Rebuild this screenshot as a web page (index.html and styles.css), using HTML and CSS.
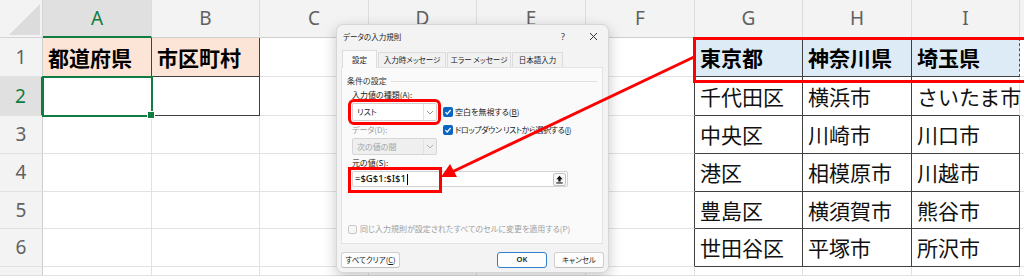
FILE: index.html
```html
<!DOCTYPE html>
<html lang="ja">
<head>
<meta charset="utf-8">
<title>データの入力規則</title>
<link rel="stylesheet" href="styles.css">
</head>
<body>
<div class="grid">
  <div class="corner"><svg width="43" height="38" viewBox="0 0 43 38"><polygon points="40,4 40,35 9,35" fill="#dcdcdc"/></svg></div>
  <div class="ch sel">A</div><div class="ch">B</div><div class="ch">C</div><div class="ch">D</div><div class="ch">E</div><div class="ch">F</div><div class="ch">G</div><div class="ch">H</div><div class="ch">I</div><div class="ch"></div>

  <div class="rh">1</div>
  <div class="c hd pe dr db">都道府県</div><div class="c hd pe dr db">市区町村</div><div class="c"></div><div class="c"></div><div class="c"></div><div class="c dr"></div>
  <div class="c hd bl dr db mark">東京都</div><div class="c hd bl dr db">神奈川県</div><div class="c hd bl dash db">埼玉県</div><div class="c"></div>

  <div class="rh sel">2</div>
  <div class="c sc dr db"></div><div class="c dr db"></div><div class="c"></div><div class="c"></div><div class="c"></div><div class="c dr"></div>
  <div class="c dr db">千代田区</div><div class="c dr db">横浜市</div><div class="c db">さいたま市</div><div class="c"></div>

  <div class="rh">3</div>
  <div class="c"></div><div class="c"></div><div class="c"></div><div class="c"></div><div class="c"></div><div class="c dr"></div>
  <div class="c dr db">中央区</div><div class="c dr db">川崎市</div><div class="c dr db">川口市</div><div class="c"></div>

  <div class="rh">4</div>
  <div class="c"></div><div class="c"></div><div class="c"></div><div class="c"></div><div class="c"></div><div class="c dr"></div>
  <div class="c dr db">港区</div><div class="c dr db">相模原市</div><div class="c dr db">川越市</div><div class="c"></div>

  <div class="rh">5</div>
  <div class="c"></div><div class="c"></div><div class="c"></div><div class="c"></div><div class="c"></div><div class="c dr"></div>
  <div class="c dr db">豊島区</div><div class="c dr db">横須賀市</div><div class="c dr db">熊谷市</div><div class="c"></div>

  <div class="rh">6</div>
  <div class="c"></div><div class="c"></div><div class="c"></div><div class="c"></div><div class="c"></div><div class="c dr"></div>
  <div class="c dr db">世田谷区</div><div class="c dr db">平塚市</div><div class="c dr db">所沢市</div><div class="c"></div>

  <div class="rh"></div>
  <div class="c"></div><div class="c"></div><div class="c"></div><div class="c"></div><div class="c"></div><div class="c"></div>
  <div class="c"></div><div class="c"></div><div class="c"></div><div class="c"></div>
</div>

<div class="dlg">
  <div class="dlg-title">
    <span class="dlg-name">データの入力規則</span>
    <span class="dlg-help">?</span>
    <span class="dlg-close"><svg width="9" height="9" viewBox="0 0 9 9"><path d="M1 1 L8 8 M8 1 L1 8" stroke="#333" stroke-width="1"/></svg></span>
  </div>
  <div class="tabs">
    <div class="tab on">設定</div>
    <div class="tab">入力時メッセージ</div>
    <div class="tab">エラー メッセージ</div>
    <div class="tab">日本語入力</div>
  </div>
  <div class="panel">
    <div class="sect"><span>条件の設定</span><i class="sect-line"></i></div>
    <div class="form">
      <div class="lbl">入力値の種類(A):</div><div></div>
      <div class="dd hl"><span class="dd-val">リスト</span><span class="dd-btn"><svg width="8" height="5" viewBox="0 0 8 5"><path d="M1 1 L4 4 L7 1" stroke="#888" fill="none" stroke-width="0.9"/></svg></span></div>
      <div class="chk"><svg class="box" width="10" height="10" viewBox="0 0 10 10"><rect width="10" height="10" rx="2" fill="#0a64c2"/><path d="M2.4 5.2 L4.2 7 L7.6 3" stroke="#fff" fill="none" stroke-width="1.2"/></svg><span>空白を無視する(<u>B</u>)</span></div>
      <div class="lbl dis">データ(D):</div>
      <div class="chk"><svg class="box" width="10" height="10" viewBox="0 0 10 10"><rect width="10" height="10" rx="2" fill="#0a64c2"/><path d="M2.4 5.2 L4.2 7 L7.6 3" stroke="#fff" fill="none" stroke-width="1.2"/></svg><span class="narrow">ドロップダウン リストから選択する(<u>I</u>)</span></div>
      <div class="dd dis"><span class="dd-val">次の値の間</span><span class="dd-btn"><svg width="8" height="5" viewBox="0 0 8 5"><path d="M1 1 L4 4 L7 1" stroke="#aaa" fill="none" stroke-width="0.9"/></svg></span></div>
      <div></div>
    </div>
    <div class="lbl src">元の値(S):</div>
    <div class="inp">
      <span class="inp-val">=$G$1:$I$1<i class="caret"></i></span>
      <span class="inp-btn"><svg width="9" height="9" viewBox="0 0 9 9"><path d="M4.5 0.8 L1.3 4.3 H3.3 V6.6 H5.7 V4.3 H7.7 Z" fill="#111"/><rect x="1.3" y="7.4" width="6.4" height="1.1" fill="#111"/></svg></span>
      <span class="inp-mark"></span>
    </div>
    <div class="chk dis all"><span class="box-off"></span><span>同じ入力規則が設定されたすべてのセルに変更を適用する(P)</span></div>
  </div>
  <div class="btns">
    <div class="btn clr">すべてクリア(<u>C</u>)</div>
    <div class="spacer"></div>
    <div class="btn ok">OK</div>
    <div class="btn cancel">キャンセル</div>
  </div>
</div>

<svg class="arrow" width="1024" height="276" viewBox="0 0 1024 276">
  <line x1="694" y1="57" x2="452" y2="172" stroke="#ff0000" stroke-width="3"/>
  <polygon points="441,177 457,177 450,164" fill="#ff0000"/>
</svg>
</body>
</html>
```

FILE: styles.css
```css
* { box-sizing: border-box; margin: 0; padding: 0; }

body {
  margin: 0;
  width: 1024px;
  height: 276px;
  overflow: hidden;
  background: #ffffff;
  position: relative;
  font-family: "Noto Sans CJK JP", "Noto Sans", sans-serif;
}

.grid {
  display: grid;
  grid-template-columns: 43px 109px 108px 109px 108px 109px 109px 108px 109px 108px 1fr;
  grid-template-rows: 38px 39px 39px 38px 38px 37px 38px 1fr;
  height: 276px;
  overflow: hidden;
}

.corner {
  background: #f3f3f3;
  border-right: 1px solid #d4d4d4;
  border-bottom: 1px solid #d4d4d4;
}
.corner svg { display: block; }

.ch {
  background: #f3f3f3;
  border-right: 1px solid #dcdcdc;
  border-bottom: 1px solid #cfcfcf;
  display: flex;
  align-items: center;
  justify-content: center;
  font-family: "Noto Sans", sans-serif;
  font-size: 19px;
  color: #616161;
  line-height: 1;
}
.ch.sel {
  background: #e0e0e0;
  color: #107c41;
  border-bottom: 2px solid #107c41;
}

.rh {
  background: #f3f3f3;
  border-right: 1px solid #cfcfcf;
  border-bottom: 1px solid #e0e0e0;
  display: flex;
  align-items: center;
  justify-content: center;
  font-family: "Noto Sans", sans-serif;
  font-size: 19px;
  color: #616161;
  line-height: 1;
}
.rh.sel {
  background: #e0e0e0;
  color: #107c41;
  border-right: 2px solid #107c41;
}

.c {
  border-right: 1px solid #e2e2e2;
  border-bottom: 1px solid #e2e2e2;
  display: flex;
  align-items: center;
  padding-left: 5px;
  font-size: 21px;
  line-height: 1;
  color: #111;
  white-space: nowrap;
  min-width: 0;
}
.c.hd { font-weight: 700; color: #000; }
.c.pe { background: #fce4d6; }
.c.bl { background: #ddebf7; }
.c.dr { border-right-color: #404040; }
.c.db { border-bottom-color: #404040; }
.c.dash { border-right: 1px dashed #107c41; }

.c.sc {
  position: relative;
  outline: 2px solid #107c41;
  outline-offset: -1px;
}
.c.sc::after {
  content: "";
  position: absolute;
  right: -4px;
  bottom: -4px;
  width: 6px;
  height: 6px;
  background: #107c41;
  border: 1px solid #fff;
}

/* red annotation frame over G1:I1 */
.c.mark { position: relative; }
.c.mark::before {
  content: "";
  position: absolute;
  left: -2px;
  top: -1px;
  width: 330px;
  height: 40px;
  border: 3px solid #ff0000;
  z-index: 2;
}

/* dialog */
.dlg {
  position: absolute;
  left: 336px;
  top: 24px;
  width: 273px;
  height: 249px;
  background: #f3f3f3;
  border: 1px solid #d6d6d6;
  border-radius: 7px;
  box-shadow: 0 4px 14px rgba(0, 0, 0, 0.22);
  display: flex;
  flex-direction: column;
  font-size: 8px;
  line-height: 1;
  color: #1b1b1b;
  font-feature-settings: "palt";
  white-space: nowrap;
}

.dlg-title {
  height: 23px;
  display: flex;
  align-items: center;
  padding-left: 6px;
}
.dlg-name { font-size: 7.5px; }
.dlg-help {
  margin-left: auto;
  font-family: "Noto Sans", sans-serif;
  font-size: 9px;
  color: #333;
  width: 10px;
  text-align: center;
}
.dlg-close {
  width: 9px;
  height: 9px;
  margin: 0 10px 0 21px;
  display: flex;
}

.tabs {
  display: flex;
  align-items: flex-end;
  padding-left: 5px;
  height: 18px;
  margin-top: 1px;
}
.tab {
  height: 15px;
  display: flex;
  align-items: center;
  justify-content: center;
  background: #f1f1f1;
  border: 1px solid #dcdcdc;
  border-bottom: none;
  margin-right: 1px;
  color: #222;
  font-size: 7.5px;
}
.tab.on {
  height: 18px;
  width: 35px;
  background: #fafafa;
  margin-bottom: -1px;
  position: relative;
  z-index: 1;
}
.tab:nth-child(2) { width: 68px; }
.tab:nth-child(3) { width: 64px; }
.tab:nth-child(4) { width: 51px; }

.panel {
  height: 177px;
  margin: 0 5px 0 4px;
  background: #fafafa;
  border: 1px solid #e3e3e3;
  padding: 7px 5px 8px 5px;
  display: flex;
  flex-direction: column;
}

.sect {
  display: flex;
  align-items: center;
  height: 12px;
  gap: 4px;
  color: #333;
}
.sect-line {
  flex: 1;
  height: 1px;
  background: #dedede;
}

.form {
  display: grid;
  grid-template-columns: 85px auto;
  grid-template-rows: 12px 18px 13px 17px;
  column-gap: 6px;
  row-gap: 2px;
  margin-top: 2px;
  padding-left: 5px;
}

.lbl {
  display: flex;
  align-items: center;
  color: #222;
}
.lbl.dis { color: #9b9b9b; }
.lbl.src {
  height: 12px;
  margin-top: 2px;
  padding-left: 5px;
}

.dd {
  display: flex;
  align-items: stretch;
  background: #ffffff;
  border: 1px solid #cfcfcf;
  border-radius: 2px;
}
.dd.hl {
  outline: 3px solid #ff0000;
  outline-offset: 1px;
}
.dd.dis {
  background: #efefef;
  border-color: #d6d6d6;
  color: #a3a3a3;
}
.dd-val {
  flex: 1;
  display: flex;
  align-items: center;
  padding-left: 4px;
}
.dd-btn {
  width: 13px;
  display: flex;
  align-items: center;
  justify-content: center;
  border-left: 1px solid #e2e2e2;
}

.chk {
  display: flex;
  align-items: center;
  gap: 2px;
}
.chk .box { flex: none; }
.chk .narrow { letter-spacing: -0.4px; }
.chk.dis { color: #a0a0a0; }
.box-off {
  width: 9px;
  height: 9px;
  border: 1px solid #c8c8c8;
  border-radius: 2px;
  background: #f6f6f6;
  flex: none;
  margin-right: 1px;
}
.chk.all {
  margin-top: auto;
  height: 12px;
  padding-left: 1px;
}

.inp {
  position: relative;
  margin: 2px 29px 0 5px;
  height: 16px;
  background: #ffffff;
  border: 1px solid #d2d2d2;
  border-radius: 2px;
  display: flex;
  align-items: center;
}
.inp-val {
  flex: 1;
  display: flex;
  align-items: center;
  padding-left: 2px;
  font-family: "Noto Sans", sans-serif;
  font-size: 9.5px;
  font-weight: 500;
  color: #111;
}
.caret {
  display: inline-block;
  width: 1px;
  height: 11px;
  background: #000;
  margin-left: 1px;
}
.inp-btn {
  width: 13px;
  height: 13px;
  margin-right: 1px;
  border: 1px solid #c4c4c4;
  border-radius: 2px;
  background: #f8f8f8;
  display: flex;
  align-items: center;
  justify-content: center;
}
.inp-mark {
  position: absolute;
  left: -5px;
  top: -5px;
  width: 94px;
  height: 26px;
  border: 3px solid #ff0000;
}

.btns {
  display: flex;
  align-items: center;
  margin: 8px 4px 0 4px;
  gap: 7px;
}
.spacer { flex: 1; }
.btn {
  height: 16px;
  display: flex;
  align-items: center;
  justify-content: center;
  background: #fdfdfd;
  border: 1px solid #d0d0d0;
  border-bottom-color: #bdbdbd;
  border-radius: 3px;
  color: #1b1b1b;
  font-size: 7.5px;
}
.btn.clr { width: 59px; }
.btn.ok {
  width: 50px;
  border: 1px solid #2f7fd0;
  font-family: "Noto Sans", sans-serif;
  font-weight: 600;
}
.btn.cancel { width: 50px; }

.arrow {
  position: absolute;
  left: 0;
  top: 0;
  pointer-events: none;
}
```
